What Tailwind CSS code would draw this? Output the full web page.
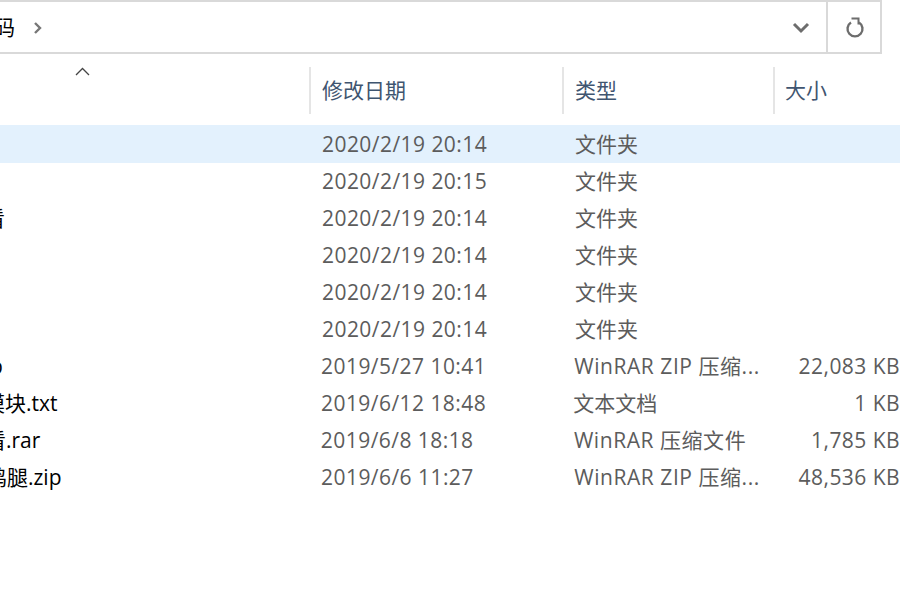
<!DOCTYPE html>
<html lang="en">
<head>
  <meta charset="UTF-8" />
  <title>文件资源管理器</title>
  <script src="https://cdn.jsdelivr.net/npm/@tailwindcss/browser@4"></script>
</head>
<body class="w-[900px] h-[600px] overflow-hidden bg-white font-['Open_Sans','Noto_Sans_CJK_SC',sans-serif] text-[21px] leading-[37px]">
  <!-- Address bar -->
  <div class="flex h-[54px] w-[882px] border-t-2 border-b-2 border-r-2 border-[#d9d9d9]">
    <div class="flex-1 flex items-center overflow-hidden">
      <span class="-ml-[6px] text-black">码</span>
      <svg class="ml-[18px] mt-[1px]" width="9" height="14" viewBox="0 0 9 14" fill="none" stroke="#777" stroke-width="2.400"><path d="M2 2 7 7 2 12"/></svg>
      <svg class="ml-auto mr-[16px] mt-[1px]" width="18" height="12" viewBox="0 0 18 12" fill="none" stroke="#6d6d6d" stroke-width="3"><path d="M2 2 9 9 16 2"/></svg>
    </div>
    <div class="w-[54px] border-l-2 border-[#d9d9d9] flex items-center pl-[17px]">
      <svg width="20" height="22" viewBox="0 0 20 22" fill="none" stroke="#6d6d6d" stroke-width="2.400"><path d="M6 6.500a7.500 7.500 0 1 0 8 0"/><path d="M6.500 2.500h7v6" stroke-width="2"/></svg>
    </div>
  </div>

  <!-- Column headers -->
  <div class="flex h-[71px] pt-[13px] text-[#3f5570]">
    <div class="w-[309px] relative">
      <svg class="absolute left-[75px] top-0" width="15" height="9" viewBox="0 0 15 9" fill="none" stroke="#444" stroke-width="1.300"><path d="M1 8 7.500 1.500 14 8"/></svg>
    </div>
    <div class="w-[253px] h-[47px] border-l-2 border-[#e5e5e5] pl-[11px] leading-[47px]">修改日期</div>
    <div class="w-[211px] h-[47px] border-l-2 border-[#e5e5e5] pl-[11px] leading-[47px]">类型</div>
    <div class="h-[47px] border-l-2 border-[#e5e5e5] pl-[10px] leading-[47px]">大小</div>
  </div>

  <!-- File rows -->
  <div class="text-[#5c5c5c] leading-[39px]">
    <div class="flex h-[38px] -mb-[1px] bg-[#e3f1fd]">
      <div class="w-[322px]"></div><div class="w-[253px] tracking-[0.45px]">2020/2/19 20:14</div><div class="w-[210px]">文件夹</div>
    </div>
    <div class="flex h-[37px]">
      <div class="w-[322px]"></div><div class="w-[253px] tracking-[0.45px]">2020/2/19 20:15</div><div class="w-[210px]">文件夹</div>
    </div>
    <div class="flex h-[37px]">
      <div class="w-[322px] overflow-hidden text-black"><span class="-ml-[16px] block">看</span></div><div class="w-[253px] tracking-[0.45px]">2020/2/19 20:14</div><div class="w-[210px]">文件夹</div>
    </div>
    <div class="flex h-[37px]">
      <div class="w-[322px]"></div><div class="w-[253px] tracking-[0.45px]">2020/2/19 20:14</div><div class="w-[210px]">文件夹</div>
    </div>
    <div class="flex h-[37px]">
      <div class="w-[322px]"></div><div class="w-[253px] tracking-[0.45px]">2020/2/19 20:14</div><div class="w-[210px]">文件夹</div>
    </div>
    <div class="flex h-[37px]">
      <div class="w-[322px]"></div><div class="w-[253px] tracking-[0.45px]">2020/2/19 20:14</div><div class="w-[210px]">文件夹</div>
    </div>
    <div class="flex h-[37px]">
      <div class="w-[322px] overflow-hidden text-black"><span class="-ml-[10px] block">p</span></div><div class="w-[253px] tracking-[0.45px]">2019/5/27 10:41</div><div class="ml-px w-[225px] whitespace-nowrap tracking-[0.55px]">WinRAR ZIP 压缩...</div><div class="whitespace-nowrap tracking-[0.45px]">22,083 KB</div>
    </div>
    <div class="flex h-[37px]">
      <div class="w-[322px] overflow-hidden text-black"><span class="-ml-[16px] block whitespace-nowrap">模块.txt</span></div><div class="w-[253px] tracking-[0.45px]">2019/6/12 18:48</div><div class="w-[282px]">文本文档</div><div class="whitespace-nowrap tracking-[0.45px]">1 KB</div>
    </div>
    <div class="flex h-[37px]">
      <div class="w-[322px] overflow-hidden text-black"><span class="-ml-[15px] block whitespace-nowrap">看.rar</span></div><div class="w-[253px] tracking-[0.45px]">2019/6/8 18:18</div><div class="ml-px w-[238px] whitespace-nowrap tracking-[0.55px]">WinRAR 压缩文件</div><div class="whitespace-nowrap tracking-[0.45px]">1,785 KB</div>
    </div>
    <div class="flex h-[37px]">
      <div class="w-[322px] overflow-hidden text-black"><span class="-ml-[14px] block whitespace-nowrap">鸡腿.zip</span></div><div class="w-[253px] tracking-[0.45px]">2019/6/6 11:27</div><div class="ml-px w-[225px] whitespace-nowrap tracking-[0.55px]">WinRAR ZIP 压缩...</div><div class="whitespace-nowrap tracking-[0.45px]">48,536 KB</div>
    </div>
  </div>
</body>
</html>
